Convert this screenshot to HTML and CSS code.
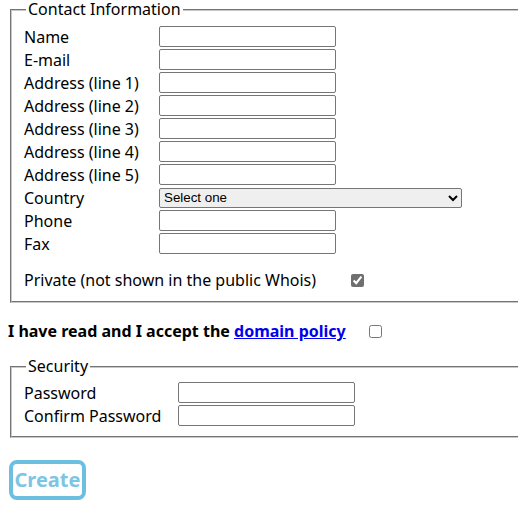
FILE: index.html
```html
<!DOCTYPE html>
<html>
<head>
<meta charset="utf-8">
<link rel="stylesheet" href="styles.css">
</head>
<body>
<form class="form">
  <fieldset class="box contact">
    <legend class="box-title">Contact Information</legend>
    <div class="fields">
      <label class="row-label">Name</label><input class="text" type="text">
      <label class="row-label">E-mail</label><input class="text" type="text">
      <label class="row-label">Address (line 1)</label><input class="text" type="text">
      <label class="row-label">Address (line 2)</label><input class="text" type="text">
      <label class="row-label">Address (line 3)</label><input class="text" type="text">
      <label class="row-label">Address (line 4)</label><input class="text" type="text">
      <label class="row-label">Address (line 5)</label><input class="text" type="text">
      <label class="row-label">Country</label><select class="country"><option>Select one</option></select>
      <label class="row-label">Phone</label><input class="text" type="text">
      <label class="row-label">Fax</label><input class="text" type="text">
    </div>
    <div class="private">
      <span>Private (not shown in the public Whois)</span>
      <input class="check private-check" type="checkbox" checked>
    </div>
  </fieldset>
  <p class="accept">I have read and I accept the <a class="policy" href="#">domain policy</a> <input class="check accept-check" type="checkbox"></p>
  <fieldset class="box security">
    <legend class="box-title">Security</legend>
    <div class="fields wide">
      <label class="row-label">Password</label><input class="text" type="password">
      <label class="row-label">Confirm Password</label><input class="text" type="password">
    </div>
  </fieldset>
  <button class="create" type="button">Create</button>
</form>
</body>
</html>
```

FILE: styles.css
```css
html {
  overflow: hidden;
}
body {
  margin: 0 0 0 8px;
  font-family: "Noto Sans", "Open Sans", sans-serif;
  font-size: 16px;
  color: #000;
  background: #fff;
}
.form {
  margin: 0;
}
.box {
  display: block;
  margin: 0 0 0 2px;
  padding: 6px 12px 10px;
  border: 2px groove #c8c8c8;
  border-right: none;
}
.box-title {
  padding: 0 2px;
  margin-left: 2px;
  line-height: 19px;
}
.fields {
  display: grid;
  grid-template-columns: 135px max-content;
  align-items: center;
  grid-auto-rows: 23px;
}
.fields.wide {
  grid-template-columns: 154px max-content;
}
.row-label {
  line-height: 20px;
}
.text {
  box-sizing: border-box;
  width: 177px;
  height: 21px;
  margin: 0;
  border: 1px solid #767676;
  border-radius: 2px;
  padding: 1px 2px;
}
.country {
  box-sizing: border-box;
  width: 303px;
  height: 20px;
  margin: 0;
  font-family: "Liberation Sans", Arial, sans-serif;
  font-size: 13.33px;
  border: 1px solid #767676;
  border-radius: 2px;
}
.private {
  display: flex;
  align-items: center;
  margin-top: 14px;
  height: 22px;
}
.check {
  width: 13px;
  height: 13px;
  margin: 0;
}
.private-check {
  margin-left: 35px;
  accent-color: #6f6f6f;
}
.accept {
  margin: 17px 0 0;
  font-weight: bold;
  line-height: 22px;
  display: flex;
  align-items: center;
  white-space: pre;
}
.policy {
  color: #0000ee;
}
.accept-check {
  margin-left: 23px;
}
.security {
  margin-top: 15px;
  padding-top: 5px;
  padding-bottom: 9px;
}
.create {
  margin: 22px 0 0 1px;
  width: 77px;
  height: 40px;
  border: 4px solid #6cbfe0;
  border-radius: 8px;
  background: #fff;
  color: #7cc6e3;
  font-family: "Noto Sans", "Open Sans", sans-serif;
  font-weight: bold;
  font-size: 20px;
  padding: 0;
  line-height: 30px;
}
```
